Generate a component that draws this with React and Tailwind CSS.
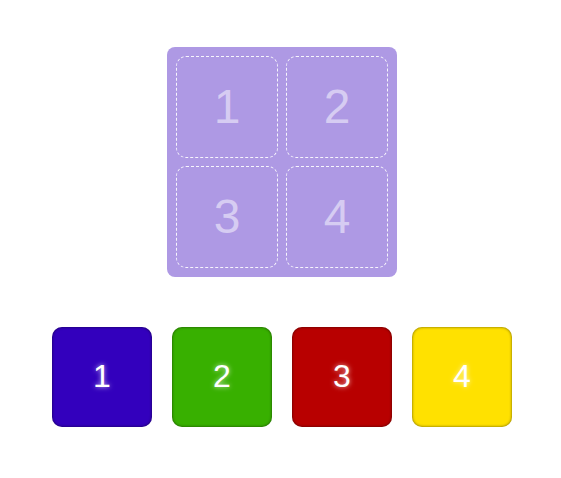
import React from 'react';

const slots = [1, 2, 3, 4];

const tiles = [
    { n: 1, color: 'bg-[#3300bd]' },
    { n: 2, color: 'bg-[#38b000]' },
    { n: 3, color: 'bg-[#b80000]' },
    { n: 4, color: 'bg-[#ffe100]' },
];

export default function App() {
    return (
        <div className="w-full h-[478px] bg-white flex flex-col items-center pt-[47px] pl-[3px] font-['Liberation_Sans',Arial,sans-serif]">
            {/* drop zone */}
            <div className="w-[230px] h-[230px] rounded-[8px] bg-[#ae99e4] p-[9px] grid grid-cols-2 gap-[8px]">
                {slots.map(n =>
                    <div key={n} className="w-[102px] h-[102px] rounded-[10px] border border-dashed border-white/90 flex items-center justify-center text-[48px] leading-none text-[#d6ccf2]">
                        {n}
                    </div>
                )}
            </div>
            {/* draggable tiles */}
            <div className="flex gap-[20px] mt-[50px]">
                {tiles.map(t =>
                    <div key={t.n} className={`w-[100px] h-[100px] rounded-[10px] ${t.color} shadow-[inset_0_0_3px_rgba(0,0,0,0.6)] flex items-center justify-center pb-[2px] text-white text-[32px] leading-none [text-shadow:0_0_5px_rgba(255,255,255,0.7)]`}>
                        {t.n}
                    </div>
                )}
            </div>
        </div>
    )
}
